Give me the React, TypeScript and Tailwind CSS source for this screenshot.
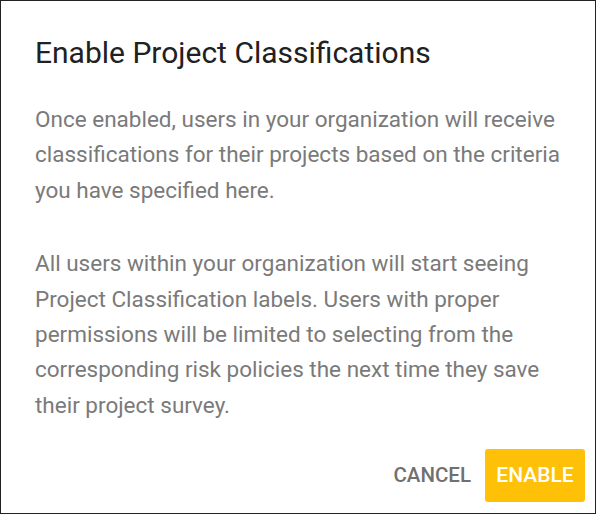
export default function App() {
  return (
    <div className="w-[596px] h-[514px] border border-[#222] bg-white font-['Roboto',sans-serif] flex flex-col">
      <h2 className="pl-[34px] pt-[34px] text-[30px] leading-[36px] text-[#212121]">Enable Project Classifications</h2>
      <div className="pl-[34px] pr-[30px] pt-[31px] text-[22.5px] leading-[35.4px] text-[#7a7a7a]">
        <p>
          Once enabled, users in your organization will receive classifications for their projects based on the criteria
          you have specified here.
        </p>
        <p className="mt-[38px]">
          All users within your organization will start seeing Project Classification labels. Users with proper
          permissions will be limited to selecting from the corresponding risk policies the next time they save their
          project survey.
        </p>
      </div>
      <div className="mt-auto flex justify-end items-center gap-[4px] pr-[10px] pb-[11px]">
        <button type="button" className="px-[10px] h-[53px] text-[20.5px] font-medium uppercase text-[#707070]">
          Cancel
        </button>
        <button
          type="button"
          className="w-[100px] h-[53px] rounded-[3px] bg-[#FFC107] text-[21px] font-medium uppercase text-white"
        >
          Enable
        </button>
      </div>
    </div>
  )
}
